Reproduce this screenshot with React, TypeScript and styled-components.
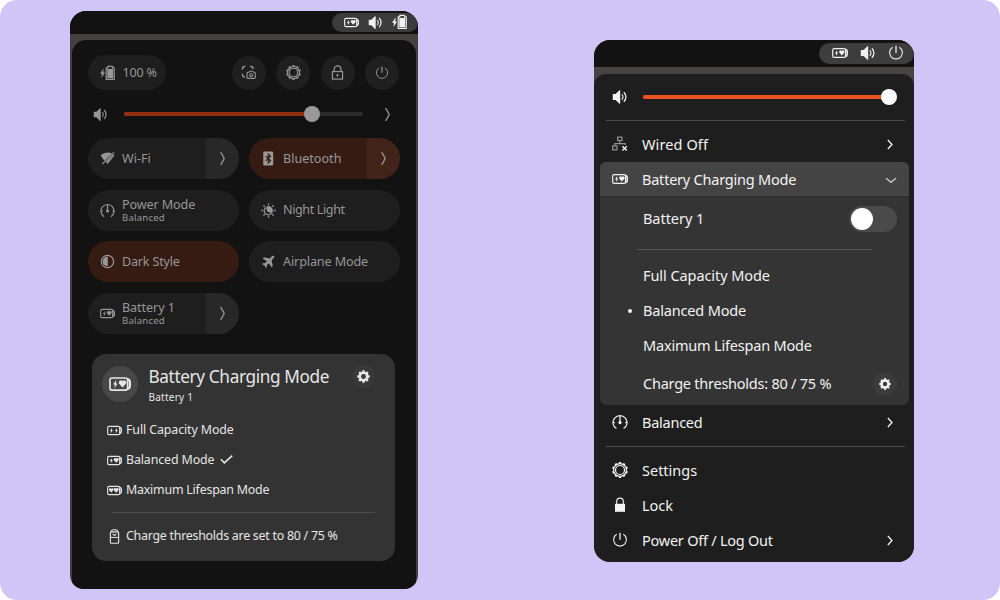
import React from "react";
import styled, { createGlobalStyle } from "styled-components";

const GlobalStyle = createGlobalStyle`
  * { box-sizing: border-box; }
  html, body { margin: 0; background: #ffffff; }
  body { font-family: "Noto Sans", "Open Sans", sans-serif; }
  svg { display: block; flex: none; }
`;

/* ---------- icons ---------- */

type IconProps = { size?: number };

const Svg = ({ size = 16, children }: IconProps & { children: React.ReactNode }) => (
  <svg width={size} height={size} viewBox="0 0 16 16" fill="none" stroke="currentColor" strokeWidth="1.2">
    {children}
  </svg>
);

type CellGlyph = "bolt" | "heart";

const cellPaths: Record<CellGlyph, string> = {
  bolt: "M2.2 -.3 L0 3 H1.3 L.9 5.6 L3.3 2.2 H2 Z",
  heart: "M2.3 4.9 L.1 2.5 A1.3 1.3 0 0 1 2.3 .8 A1.3 1.3 0 0 1 4.5 2.5 Z",
};

const BatteryMode = ({ size = 16, left = "bolt", right = "heart" }: IconProps & { left?: CellGlyph; right?: CellGlyph }) => (
  <Svg size={size}>
    <rect x=".7" y="3.6" width="12.8" height="8.8" rx="1.5" />
    <path d="M13.4 4.4 C14.8 4.7 15.2 5.6 15.2 6.6 V9.4 C15.2 10.4 14.8 11.3 13.4 11.6" strokeWidth="1.6" />
    <g fill="currentColor" stroke="none">
      <path d={cellPaths[left]} transform={left === "heart" ? "translate(2.2 5.3)" : "translate(3 5.4)"} />
      <path d={cellPaths[right]} transform={right === "heart" ? "translate(7.3 5.1) scale(1.1)" : "translate(8.4 5.4)"} />
    </g>
  </Svg>
);

const BatteryUpright = ({ size = 14 }: IconProps) => (
  <Svg size={size}>
    <rect x="3.6" y="3.1" width="8.8" height="12.1" rx="1" />
    <path d="M4.4 3 C4.6 1.4 5.6.8 6.6.8 H9.4 C10.4.8 11.4 1.4 11.6 3" />
    <path d="M4 9 H12" strokeWidth="1" />
    <path d="M6 5.1 L8 7 L10 5.1" strokeWidth="1.1" />
  </Svg>
);

const BatteryCharging = ({ size = 16 }: IconProps) => (
  <Svg size={size}>
    <path d="M3.7 3.2 L-.1 8.8 H2 L1.5 13 L5 7.5 H3.2 Z" fill="currentColor" stroke="none" />
    <path d="M6.2 2.8 H7.8 V1.3 H12.6 V2.8 H14.2 V14.5 H6.2 Z" strokeLinejoin="round" strokeWidth="1.2" />
    <rect x="7.3" y="3.9" width="5.8" height="9.5" fill="currentColor" stroke="none" />
  </Svg>
);

const Volume = ({ size = 16 }: IconProps) => (
  <Svg size={size}>
    <path d="M.8 5.1 H3.6 L7.5 1.2 H8.2 V14.8 H7.5 L3.6 10.9 H.8 Z" fill="currentColor" stroke="none" />
    <path d="M9.8 5.4 C11.2 6.8 11.2 9.2 9.8 10.6" strokeWidth="1.3" />
    <path d="M11.8 3.2 C14.6 5.8 14.6 10.2 11.8 12.8" strokeWidth="1.3" />
  </Svg>
);

const Screenshot = ({ size = 16 }: IconProps) => (
  <Svg size={size}>
    <path d="M1.6 5 V3.6 A2 2 0 0 1 3.6 1.6 H4.6 M9.8 1.6 H10.8 A2 2 0 0 1 12.8 3.6 V4.2 M1.6 9.4 V10.8 A2 2 0 0 0 3.6 12.8 H4.2" strokeWidth="1.5" />
    <path d="M7.2 7.7 H8.6 L9.3 6.6 H12.5 L13.2 7.7 H14.4 A.9.9 0 0 1 15.2 8.6 V13.3 A.9.9 0 0 1 14.4 14.2 H7.2 A.9.9 0 0 1 6.4 13.3 V8.6 A.9.9 0 0 1 7.2 7.7 Z" />
    <circle cx="10.8" cy="10.8" r="1.5" />
  </Svg>
);

const teeth = Array.from({ length: 10 }, (_, i) => i * 36);

const GearOutline = ({ size = 16 }: IconProps) => (
  <Svg size={size}>
    <circle cx="8" cy="8" r="6.4" strokeWidth="1.2" />
    <circle cx="8" cy="8" r="4.5" strokeWidth="1.2" />
    {teeth.map((a) => (
      <path key={a} d="M6.7 1.6 L7 .1 H9 L9.3 1.6 Z" fill="currentColor" stroke="none" transform={`rotate(${a} 8 8)`} />
    ))}
  </Svg>
);

const GearSolid = ({ size = 13 }: IconProps) => (
  <Svg size={size}>
    <circle cx="8" cy="8" r="4.5" strokeWidth="3" />
    {[0, 45, 90, 135, 180, 225, 270, 315].map((a) => (
      <path key={a} d="M6.1 3 L6.6 .4 H9.4 L9.9 3 Z" fill="currentColor" stroke="none" transform={`rotate(${a} 8 8)`} />
    ))}
  </Svg>
);

const LockOutline = ({ size = 16 }: IconProps) => (
  <Svg size={size}>
    <rect x="2.6" y="7" width="10.8" height="8" strokeWidth="1.3" />
    <path d="M4.4 7 V4.6 A3.6 3.6 0 0 1 11.6 4.6 V7" strokeWidth="1.3" />
    <rect x="7.1" y="9.6" width="1.8" height="2.8" fill="currentColor" stroke="none" />
  </Svg>
);

const LockSolid = ({ size = 16 }: IconProps) => (
  <Svg size={size}>
    <rect x="3" y="6.8" width="10" height="8" fill="currentColor" stroke="none" />
    <path d="M4.7 7.4 V4.4 A3.3 3.3 0 0 1 11.3 4.4 V7.4" strokeWidth="1.1" />
  </Svg>
);

const Power = ({ size = 16 }: IconProps) => (
  <Svg size={size}>
    <path d="M8 .8 V7.8" strokeWidth="1.3" />
    <path d="M4.7 2.2 A6.4 6.4 0 1 0 11.3 2.2" strokeWidth="1.1" />
  </Svg>
);

const Chevron = ({ size = 16, down = false }: IconProps & { down?: boolean }) => (
  <Svg size={size}>
    <path d={down ? "M2.4 6 L8 10.6 L13.6 6" : "M5.2 3.2 L9.6 8 L5.2 12.8"} strokeWidth={down ? 1.7 : 1.4} />
  </Svg>
);

const TallChevron = ({ size = 16 }: IconProps) => (
  <Svg size={size}>
    <path d="M6 1.2 Q8.2 4.6 9.8 8 Q8.2 11.4 6 14.8" strokeWidth="1.4" />
  </Svg>
);

const WifiOff = ({ size = 16 }: IconProps) => (
  <Svg size={size}>
    <path d="M.6 4.6 C4.6 1.2 9.6 1 12.6 2.6 L4.6 10.4 Z" fill="currentColor" stroke="none" />
    <path d="M14.2 3.6 L15.6 4.6 L8 13.8 L6.2 11.8 Z" fill="currentColor" stroke="none" />
    <path d="M15 1.4 L2.4 14" strokeWidth="1.3" />
  </Svg>
);

const Bluetooth = ({ size = 16 }: IconProps) => (
  <svg width={size} height={size} viewBox="0 0 16 16" fill="none">
    <rect x="2.4" y=".6" width="10.6" height="14.8" rx="1.4" fill="currentColor" />
    <path d="M5 5.4 L10.2 10.4 L7.8 12.8 V3.2 L10.2 5.6 L5 10.6" stroke="#351b12" strokeWidth="1.2" />
  </svg>
);

const Gauge = ({ size = 16 }: IconProps) => (
  <Svg size={size}>
    <path d="M4.4 14.6 A7 7 0 1 1 11.6 14.6" strokeWidth="1.2" />
    <path d="M8 1.4 V8" strokeWidth="1.3" />
    <circle cx="8" cy="8.6" r="1.6" fill="currentColor" stroke="none" />
    <path d="M1 8.6 H2.8 M13.2 8.6 H15" />
  </Svg>
);

const NightLight = ({ size = 16 }: IconProps) => (
  <Svg size={size}>
    {[0, 45, 90, 135, 180, 225, 270, 315].map((a) => (
      <path key={a} d="M8 .4 V2.4" strokeWidth="1.4" transform={`rotate(${a} 8 8)`} />
    ))}
    <path d="M5 4.8 A4.4 4.4 0 1 0 12 9.6" strokeWidth="1.2" />
    <path d="M5.8 3.9 A4.7 4.7 0 0 1 12.6 9 C10.6 12 4.6 9.6 5.8 3.9 Z" fill="currentColor" stroke="none" />
  </Svg>
);

const DarkStyleIcon = ({ size = 16 }: IconProps) => (
  <Svg size={size}>
    <circle cx="8" cy="8" r="6.5" strokeWidth="1.3" />
    <path d="M8.3 3 H7.8 A5 5 0 0 0 7.8 13 H8.3 Z" fill="currentColor" stroke="none" />
  </Svg>
);

const Airplane = ({ size = 16 }: IconProps) => (
  <Svg size={size}>
    <path
      d="M14 2 C14.5 2.7 14.1 3.8 13.3 4.6 L11.3 6.7 L12.6 12.8 L11.2 14 L8.4 9.8 L6.2 11.9 L6.4 13.6 L5.2 14.8 L3.8 12.2 L1.2 10.8 L2.4 9.6 L4.1 9.8 L6.3 7.6 L1.9 4.9 L3.2 3.5 L9.3 4.7 L11.4 2.7 C12.2 1.9 13.3 1.5 14 2 Z"
      fill="currentColor"
      stroke="none"
    />
  </Svg>
);

const WiredOff = ({ size = 16 }: IconProps) => (
  <Svg size={size}>
    <g opacity="0.55">
      <rect x="5.6" y="1.1" width="4.4" height="3.4" />
      <rect x=".6" y="10" width="4.4" height="3.8" />
      <path d="M7.8 4.4 V7.4 M2.8 10 V7.6 H13.2 V9" />
    </g>
    <path d="M10.4 10.2 L14.8 14.6 M14.8 10.2 L10.4 14.6" strokeWidth="1.4" />
  </Svg>
);

const CheckIcon = styled.svg`
  margin-left: 1.5px;
`;

const Check = () => (
  <CheckIcon width="13" height="10" viewBox="0 0 13 10" fill="none" stroke="currentColor" strokeWidth="1.6">
    <path d="M.8 4.2 L4.4 7.8 L12.2 .6" />
  </CheckIcon>
);

/* ---------- shared parts ---------- */

const Stage = styled.main`
  width: 1000px;
  height: 600px;
  border-radius: 17px;
  background: #d0c5f7;
  display: flex;
  align-items: flex-start;
  justify-content: space-between;
  padding: 11px 86px 0 70px;
`;

const Text = styled.span<{ $size?: number; $track?: number }>`
  font-size: ${(p) => p.$size ?? 14.5}px;
  letter-spacing: ${(p) => p.$track ?? 0}px;
  line-height: 1;
  white-space: nowrap;
`;

const TopBar = styled.header<{ $height: number }>`
  height: ${(p) => p.$height}px;
  background: #121212;
  display: flex;
  justify-content: flex-end;
  align-items: center;
`;

const Round = styled.div<{ $size: number; $bg: string }>`
  width: ${(p) => p.$size}px;
  height: ${(p) => p.$size}px;
  border-radius: 50%;
  background: ${(p) => p.$bg};
  flex: none;
  display: flex;
  align-items: center;
  justify-content: center;
`;

const Track = styled.div<{ $width: number; $bg: string }>`
  width: ${(p) => p.$width}px;
  height: 4px;
  border-radius: 2px;
  background: ${(p) => p.$bg};
  display: flex;
  align-items: center;
`;

const Fill = styled.div<{ $width: number; $bg: string }>`
  width: ${(p) => p.$width}px;
  height: 4px;
  flex: none;
  border-radius: 2px;
  background: ${(p) => p.$bg};
`;

const Knob = styled.div<{ $bg: string }>`
  width: 16px;
  height: 16px;
  margin-left: -8px;
  border-radius: 50%;
  flex: none;
  background: ${(p) => p.$bg};
`;

/* ---------- quick settings panel ---------- */

const QuickWindow = styled.section`
  width: 348px;
  height: 578px;
  border-radius: 16px 16px 14px 14px;
  overflow: hidden;
  background: #434241;
`;

const QuickTray = styled.div`
  width: 86px;
  height: 19px;
  border-radius: 10px;
  background: #3b3b3b;
  color: #f0f0f0;
  display: flex;
  align-items: center;
  gap: 9px;
  padding: 0 0 1px 11.5px;
`;

const QuickPanel = styled.div`
  height: 549.5px;
  margin: 5.5px 2.5px 0 1.5px;
  padding: 15.5px 16.5px 0 16.5px;
  border-radius: 14px 14px 0 0;
  background: #121212;
  color: #979797;
`;

const QuickHeader = styled.div`
  display: flex;
  align-items: center;
  gap: 10.5px;
`;

const ChargePill = styled.div`
  width: 78px;
  height: 35px;
  border-radius: 18px;
  background: #1e1e1e;
  margin-right: auto;
  display: flex;
  align-items: center;
  gap: 6.5px;
  padding: 1px 0 0 12px;
`;

const QuickVolume = styled.div`
  height: 16px;
  margin: 16px 0 16px 5px;
  display: flex;
  align-items: center;
`;

const VolumeTrack = styled(Track)`
  margin: 0 16.5px 0 16px;
`;

const TileGrid = styled.div`
  display: grid;
  grid-template-columns: 151px 151px;
  grid-auto-rows: 41px;
  gap: 10.5px 10px;
`;

const TileBox = styled.div<{ $active?: boolean }>`
  display: flex;
  border-radius: 21px;
  overflow: hidden;
  background: ${(p) => (p.$active ? "#351b12" : "#1e1e1e")};
`;

const TileBody = styled.div`
  flex: 1;
  display: flex;
  align-items: center;
  gap: 7px;
  padding-left: 12px;
`;

const TileLabels = styled.div`
  display: flex;
  flex-direction: column;
  gap: 2px;
  padding-top: 1.4px;
`;

const TileArrow = styled.div<{ $active?: boolean }>`
  width: 33px;
  background: ${(p) => (p.$active ? "#42231a" : "#282828")};
  display: flex;
  align-items: center;
  justify-content: center;
`;

const Tile = ({ icon, label, sub, track = 0, active, arrow }: {
  icon: React.ReactNode; label: string; sub?: string; track?: number; active?: boolean; arrow?: boolean;
}) => (
  <TileBox $active={active}>
    <TileBody>
      {icon}
      <TileLabels>
        <Text $size={12.6} $track={track}>{label}</Text>
        {sub && <Text $size={9.6} $track={0.2}>{sub}</Text>}
      </TileLabels>
    </TileBody>
    {arrow && <TileArrow $active={active}><TallChevron size={15} /></TileArrow>}
  </TileBox>
);

const Card = styled.div`
  width: 303px;
  height: 206.5px;
  margin: 20.5px 0 0 4px;
  border-radius: 14px;
  background: #333333;
  color: #e6e6e6;
  padding: 12px 20.5px 0 10px;
`;

const CardHeader = styled.div`
  display: flex;
  height: 36px;
  gap: 10.5px;
  margin-bottom: 20px;
`;

const CardTitles = styled.div`
  display: flex;
  flex-direction: column;
  gap: 7px;
  width: 198.5px;
  padding-top: 2px;
`;

const CardGear = styled(Round)`
  margin-top: -1px;
`;

const CardItem = styled.div`
  height: 16px;
  margin: 0 0 14px 4.5px;
  display: flex;
  align-items: center;
  gap: 4.5px;
`;

const CardRule = styled.hr`
  height: 1px;
  border: 0;
  margin: 1px 0 15px 10px;
  background: #4c4c4c;
`;

const QuickSettings = () => (
  <QuickWindow>
    <TopBar $height={23}>
      <QuickTray>
        <BatteryMode size={15} />
        <Volume size={15} />
        <BatteryCharging size={16} />
      </QuickTray>
    </TopBar>
    <QuickPanel>
      <QuickHeader>
        <ChargePill>
          <BatteryCharging size={16} />
          <Text $size={12.6} $track={-0.25}>100 %</Text>
        </ChargePill>
        <Round $size={34} $bg="#1f1f1f"><Screenshot size={15} /></Round>
        <Round $size={34} $bg="#1f1f1f"><GearOutline size={15} /></Round>
        <Round $size={34} $bg="#1f1f1f"><LockOutline size={15} /></Round>
        <Round $size={34} $bg="#1f1f1f"><Power size={14} /></Round>
      </QuickHeader>
      <QuickVolume>
        <Volume size={15} />
        <VolumeTrack $width={239} $bg="#2b2b2b">
          <Fill $width={188} $bg="#962f12" />
          <Knob $bg="#999999" />
        </VolumeTrack>
        <TallChevron size={15} />
      </QuickVolume>
      <TileGrid>
        <Tile icon={<WifiOff size={15} />} label="Wi-Fi" arrow />
        <Tile icon={<Bluetooth size={15} />} label="Bluetooth" active arrow />
        <Tile icon={<Gauge size={15} />} label="Power Mode" sub="Balanced" track={-0.12} />
        <Tile icon={<NightLight size={15} />} label="Night Light" track={-0.4} />
        <Tile icon={<DarkStyleIcon size={15} />} label="Dark Style" track={-0.2} active />
        <Tile icon={<Airplane size={15} />} label="Airplane Mode" track={-0.12} />
        <Tile icon={<BatteryMode size={15} />} label="Battery 1" sub="Balanced" track={-0.08} arrow />
      </TileGrid>
      <Card>
        <CardHeader>
          <Round $size={36} $bg="#474747"><BatteryMode size={22} /></Round>
          <CardTitles>
            <Text $size={17.2} $track={-0.36}>Battery Charging Mode</Text>
            <Text $size={10} $track={0.25}>Battery 1</Text>
          </CardTitles>
          <CardGear $size={23} $bg="#393939"><GearSolid /></CardGear>
        </CardHeader>
        <CardItem><BatteryMode size={15} right="bolt" /><Text $size={12.4} $track={-0.1}>Full Capacity Mode</Text></CardItem>
        <CardItem><BatteryMode size={15} /><Text $size={12.4} $track={-0.12}>Balanced Mode</Text><Check /></CardItem>
        <CardItem><BatteryMode size={15} left="heart" /><Text $size={12.4} $track={-0.21}>Maximum Lifespan Mode</Text></CardItem>
        <CardRule />
        <CardItem><BatteryUpright size={15} /><Text $size={12.4} $track={-0.25}>Charge thresholds are set to 80 / 75 %</Text></CardItem>
      </Card>
    </QuickPanel>
  </QuickWindow>
);

/* ---------- system menu ---------- */

const MenuWindow = styled.section`
  width: 320px;
  height: 521.5px;
  margin-top: 29px;
  border-radius: 16px;
  overflow: hidden;
  background: #454442;
`;

const MenuTray = styled.div`
  width: 95px;
  height: 21px;
  border-radius: 11px;
  background: #3d3d3d;
  color: #eeeeee;
  display: flex;
  align-items: center;
  gap: 12px;
  padding: 0 0 1px 13px;
`;

const MenuPanel = styled.div`
  height: 488px;
  margin-top: 6.5px;
  border-radius: 12px 12px 0 0;
  background: #1e1e1e;
  color: #f2f2f2;
`;

const MenuVolume = styled.div`
  height: 46px;
  padding-left: 18px;
  display: flex;
  align-items: center;
  gap: 15px;
`;

const MenuRule = styled.hr<{ $before?: number; $after?: number }>`
  height: 1px;
  border: 0;
  margin: ${(p) => p.$before ?? 0}px 9px ${(p) => p.$after ?? 0}px 12px;
  background: #4b4b4b;
`;

const MenuRow = styled.div`
  height: 35px;
  padding: 0 16.5px 0 18px;
  display: flex;
  align-items: center;
  gap: 14px;

  & > svg:first-child {
    margin: -1px 0 0 -0.5px;
  }

  & > span {
    margin-left: 0.5px;
  }
`;

const Spread = styled.div`
  flex: 1;
`;

const Submenu = styled.div`
  margin: 0 5px 0 6px;
  height: 243px;
  border-radius: 6px;
  overflow: hidden;
  background: #343434;
`;

const SubmenuHead = styled(MenuRow)`
  padding: 0 11.5px 0 12px;
  background: #444444;
  border-bottom: 1px solid #2b2b2b;

  & > svg:last-child {
    color: #c4c4c4;
    margin-top: 2px;
  }
`;

const SubmenuRow = styled.div<{ $height: number }>`
  height: ${(p) => p.$height}px;
  padding: 0 12px 0 43px;
  display: flex;
  align-items: center;
  justify-content: space-between;
`;

const Choice = styled.div`
  height: 35px;
  padding-left: 27.5px;
  display: flex;
  align-items: center;
  gap: 11.5px;
`;

const Dot = styled.span<{ $on?: boolean }>`
  width: 4px;
  height: 4px;
  border-radius: 50%;
  background: ${(p) => (p.$on ? "#f2f2f2" : "transparent")};
`;

const Toggle = styled.div`
  width: 48px;
  height: 26px;
  padding: 2px;
  border-radius: 13px;
  background: #4a4a4a;
`;

const ToggleKnob = styled.div`
  width: 22px;
  height: 22px;
  border-radius: 50%;
  background: #ffffff;
`;

const SubmenuRule = styled.hr`
  height: 1px;
  border: 0;
  margin: 9px 37px 8px 37px;
  background: #555555;
`;

const Item = ({ icon, label, track = 0, arrow }: {
  icon: React.ReactNode; label: string; track?: number; arrow?: boolean;
}) => (
  <MenuRow>
    {icon}
    <Text $track={track}>{label}</Text>
    <Spread />
    {arrow && <Chevron size={15} />}
  </MenuRow>
);

const SystemMenu = () => (
  <MenuWindow>
    <TopBar $height={27}>
      <MenuTray>
        <BatteryMode />
        <Volume />
        <Power />
      </MenuTray>
    </TopBar>
    <MenuPanel>
      <MenuVolume>
        <Volume />
        <Track $width={246} $bg="#e95420">
          <Fill $width={246} $bg="#e95420" />
          <Knob $bg="#ffffff" />
        </Track>
      </MenuVolume>
      <MenuRule $before={0.5} $after={6} />
      <Item icon={<WiredOff />} label="Wired Off" track={0.1} arrow />
      <Submenu>
        <SubmenuHead>
          <BatteryMode />
          <Text $track={-0.22}>Battery Charging Mode</Text>
          <Spread />
          <Chevron size={14} down />
        </SubmenuHead>
        <SubmenuRow $height={43}>
          <Text $track={-0.05}>Battery 1</Text>
          <Toggle><ToggleKnob /></Toggle>
        </SubmenuRow>
        <SubmenuRule />
        <Choice><Dot /><Text $track={-0.07}>Full Capacity Mode</Text></Choice>
        <Choice><Dot $on /><Text $track={-0.17}>Balanced Mode</Text></Choice>
        <Choice><Dot /><Text $track={-0.19}>Maximum Lifespan Mode</Text></Choice>
        <SubmenuRow $height={41}>
          <Text $track={-0.24}>Charge thresholds: 80 / 75 %</Text>
          <Round $size={24} $bg="#3c3c3c"><GearSolid size={12} /></Round>
        </SubmenuRow>
      </Submenu>
      <Item icon={<Gauge />} label="Balanced" track={-0.25} arrow />
      <MenuRule $before={6} $after={6} />
      <Item icon={<GearOutline />} label="Settings" />
      <Item icon={<LockSolid />} label="Lock" />
      <Item icon={<Power />} label="Power Off / Log Out" track={-0.24} arrow />
    </MenuPanel>
  </MenuWindow>
);

export default function App() {
  return (
    <>
      <GlobalStyle />
      <Stage>
        <QuickSettings />
        <SystemMenu />
      </Stage>
    </>
  );
}
